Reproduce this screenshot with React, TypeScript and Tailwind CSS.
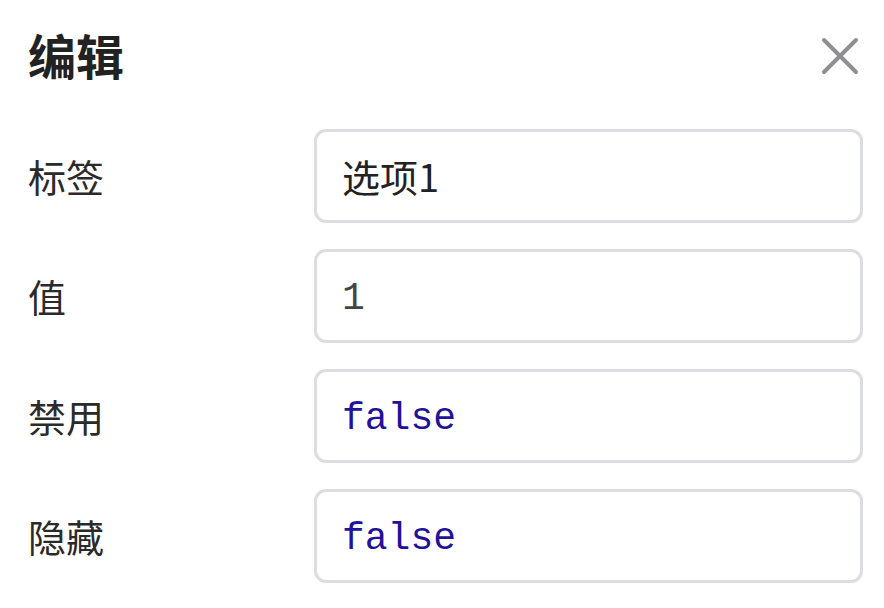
import React from 'react';

const rows = [
  { label: '标签', value: '选项1', kind: 'text' },
  { label: '值', value: '1', kind: 'plain' },
  { label: '禁用', value: 'false', kind: 'atom' },
  { label: '隐藏', value: 'false', kind: 'atom' },
];

export default function App() {
  return (
    <div className="w-[884px] h-[608px] bg-white pl-[28px] pr-[21px] font-['Noto_Sans_CJK_SC',sans-serif] text-[#222]">
      {/* header */}
      <div className="flex h-[108px] items-center justify-between">
        <h1 className="text-[48px] font-bold leading-none">编辑</h1>
        <svg width="40" height="40" viewBox="0 0 40 40" className="mr-[3px] mt-[4px]">
          <path d="M4 4 L36 36 M36 4 L4 36" stroke="#8e8e93" strokeWidth="4" strokeLinecap="round" />
        </svg>
      </div>

      {/* form */}
      <div className="mt-[21px] flex flex-col gap-[26px]">
        {rows.map((r) => (
          <div key={r.label} className="grid grid-cols-[286px_1fr] items-center">
            <div className="text-[38px] leading-none text-[#2a2a2a]">{r.label}</div>
            <div className="flex h-[94px] items-center rounded-[12px] border-[3px] border-[#dcdce3] px-[25px]">
              {r.kind === 'text' && <span className="text-[38px] leading-none text-[#222]">{r.value}</span>}
              {r.kind === 'plain' && (
                <span className="pt-[6px] font-['Liberation_Mono',monospace] text-[38px] leading-none text-[#444]">{r.value}</span>
              )}
              {r.kind === 'atom' && (
                <span className="pt-[6px] font-['Liberation_Mono',monospace] text-[38px] leading-none text-[#221199]">{r.value}</span>
              )}
            </div>
          </div>
        ))}
      </div>
    </div>
  );
}
